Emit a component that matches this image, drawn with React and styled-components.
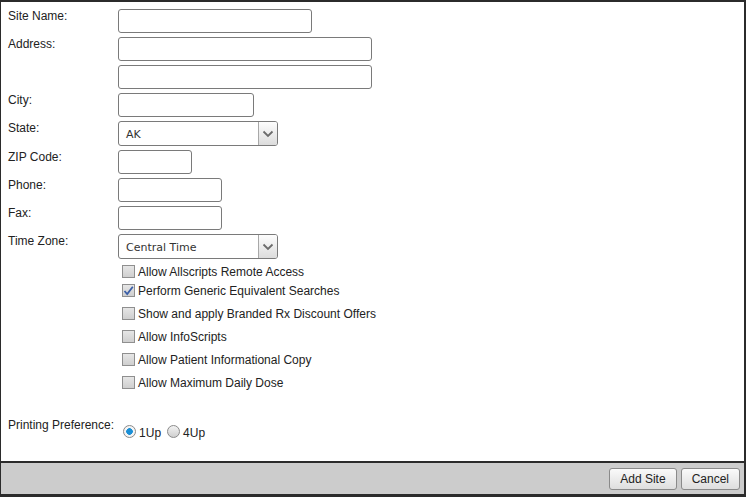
import styled, { createGlobalStyle } from 'styled-components'

const GlobalStyle = createGlobalStyle`
  html, body {
    margin: 0;
    padding: 0;
    background: #fff;
  }
  body {
    font-family: 'Liberation Sans', Arial, sans-serif;
    font-size: 12px;
    color: #222;
  }
  * { box-sizing: border-box; }
`

const rows = [
  { label: 'Site Name:', width: 194 },
  { label: 'Address:', width: 254, extra: 254 },
  { label: 'City:', width: 136 },
  { label: 'State:', select: 'AK' },
  { label: 'ZIP Code:', width: 74 },
  { label: 'Phone:', width: 104 },
  { label: 'Fax:', width: 104 },
  { label: 'Time Zone:', select: 'Central Time' },
]

const options = [
  { text: 'Allow Allscripts Remote Access', top: 6 },
  { text: 'Perform Generic Equivalent Searches', top: 6, checked: true },
  { text: 'Show and apply Branded Rx Discount Offers', top: 10 },
  { text: 'Allow InfoScripts', top: 10 },
  { text: 'Allow Patient Informational Copy', top: 10 },
  { text: 'Allow Maximum Daily Dose', top: 10 },
]

const Chevron = () => (
  <svg width='12' height='8' viewBox='0 0 12 8'>
    <path d='M1.5 1.5 L6 6 L10.5 1.5' fill='none' stroke='#6b6b6b' strokeWidth='1.8' />
  </svg>
)

const App = () => {
  return (
    <Frame>
      <GlobalStyle />
      <Content>
        <FormGrid>
          {rows.map((row) => (
            <Row key={row.label}>
              <Label>{row.label}</Label>
              <Fields>
                {row.select ? (
                  <Select>
                    <SelectText>{row.select}</SelectText>
                    <Arrow>
                      <Chevron />
                    </Arrow>
                  </Select>
                ) : (
                  <>
                    <Input $w={row.width} />
                    {row.extra && <Input $w={row.extra} />}
                  </>
                )}
              </Fields>
            </Row>
          ))}
        </FormGrid>

        <Options>
          {options.map((opt) => (
            <OptionRow key={opt.text} $top={opt.top}>
              <Box>
                {opt.checked && (
                  <svg width='11' height='11' viewBox='0 0 11 11'>
                    <path d='M1.5 6 L4.2 9 L9.8 1.8' fill='none' stroke='#3b5fa8' strokeWidth='1.8' />
                  </svg>
                )}
              </Box>
              <span>{opt.text}</span>
            </OptionRow>
          ))}
        </Options>

        <PrintRow>
          <Label>Printing Preference:</Label>
          <Radios>
            <Radio $checked />
            <RadioText>1Up</RadioText>
            <Radio />
            <RadioText>4Up</RadioText>
          </Radios>
        </PrintRow>
      </Content>
      <Footer>
        <Button>Add Site</Button>
        <Button>Cancel</Button>
      </Footer>
    </Frame>
  )
}
export default App

const Frame = styled.div`
  height: 497px;
  display: flex;
  flex-direction: column;
  border-top: 2px solid #2b2b2b;
  border-left: 1px solid #2b2b2b;
  border-right: 2px solid #2b2b2b;
  border-bottom: 3px solid #2b2b2b;
  background: #fff;
`

const Content = styled.div`
  flex: 1;
  padding: 7px 0 0 7px;
`

const FormGrid = styled.div`
  display: flex;
  flex-direction: column;
  gap: 4px;
`

const Row = styled.div`
  display: grid;
  grid-template-columns: 110px 1fr;
`

const Label = styled.div`
  font-size: 12px;
  line-height: 14px;
  padding-top: 0;
  color: #222;
`

const Fields = styled.div`
  display: flex;
  flex-direction: column;
  gap: 4px;
`

const Input = styled.div`
  width: ${({ $w }) => $w}px;
  height: 24px;
  border: 1px solid #7a7a7a;
  border-radius: 3px;
  background: #fff;
`

const Select = styled.div`
  width: 160px;
  height: 25px;
  display: flex;
  align-items: stretch;
  border: 1px solid #7a7a7a;
  border-radius: 3px;
  overflow: hidden;
  background: #fff;
`

const SelectText = styled.div`
  flex: 1;
  display: flex;
  align-items: center;
  padding: 2px 0 0 7px;
  font-family: 'DejaVu Sans', Verdana, sans-serif;
  font-size: 11px;
  color: #333;
`

const Arrow = styled.div`
  width: 19px;
  display: flex;
  align-items: center;
  justify-content: center;
  border-left: 1px solid #a8a8a8;
  background: linear-gradient(#fdfdfd, #dcdcdc);
`

const Options = styled.div`
  display: flex;
  flex-direction: column;
  padding-left: 114px;
`

const OptionRow = styled.label`
  display: flex;
  align-items: center;
  gap: 3px;
  height: 13px;
  margin-top: ${({ $top }) => $top}px;
  font-size: 12px;
  color: #222;
`

const Box = styled.span`
  width: 13px;
  height: 13px;
  border: 1px solid #8f8f8f;
  background: linear-gradient(#e6e6e6, #cfcfcf);
  display: flex;
  align-items: center;
  justify-content: center;
`

const PrintRow = styled.div`
  display: flex;
  align-items: flex-start;
  margin-top: 29px;
  gap: 8px;
`

const Radios = styled.div`
  display: flex;
  align-items: center;
  margin-top: 5px;
  padding-left: 1px;
`

const Radio = styled.span`
  width: 13px;
  height: 13px;
  border-radius: 50%;
  border: 1px solid #8a8a8a;
  background: ${({ $checked }) =>
    $checked
      ? 'radial-gradient(circle, #1a8fd6 0 3px, #f4f4f4 3.6px)'
      : 'linear-gradient(#f2f2f2, #cfcfcf)'};
`

const RadioText = styled.span`
  margin: 3px 6px 0 3px;
  font-size: 12px;
  color: #222;
`

const Footer = styled.div`
  height: 33px;
  border-top: 2px solid #2b2b2b;
  background: #cccccc;
  display: flex;
  justify-content: flex-end;
  align-items: center;
  gap: 4px;
  padding-right: 4px;
`

const Button = styled.button`
  height: 22px;
  padding: 0 10px;
  font-family: 'Liberation Sans', Arial, sans-serif;
  font-size: 12px;
  color: #222;
  border: 1px solid #8a8a8a;
  border-radius: 3px;
  background: linear-gradient(#fafafa, #dedede);
`
